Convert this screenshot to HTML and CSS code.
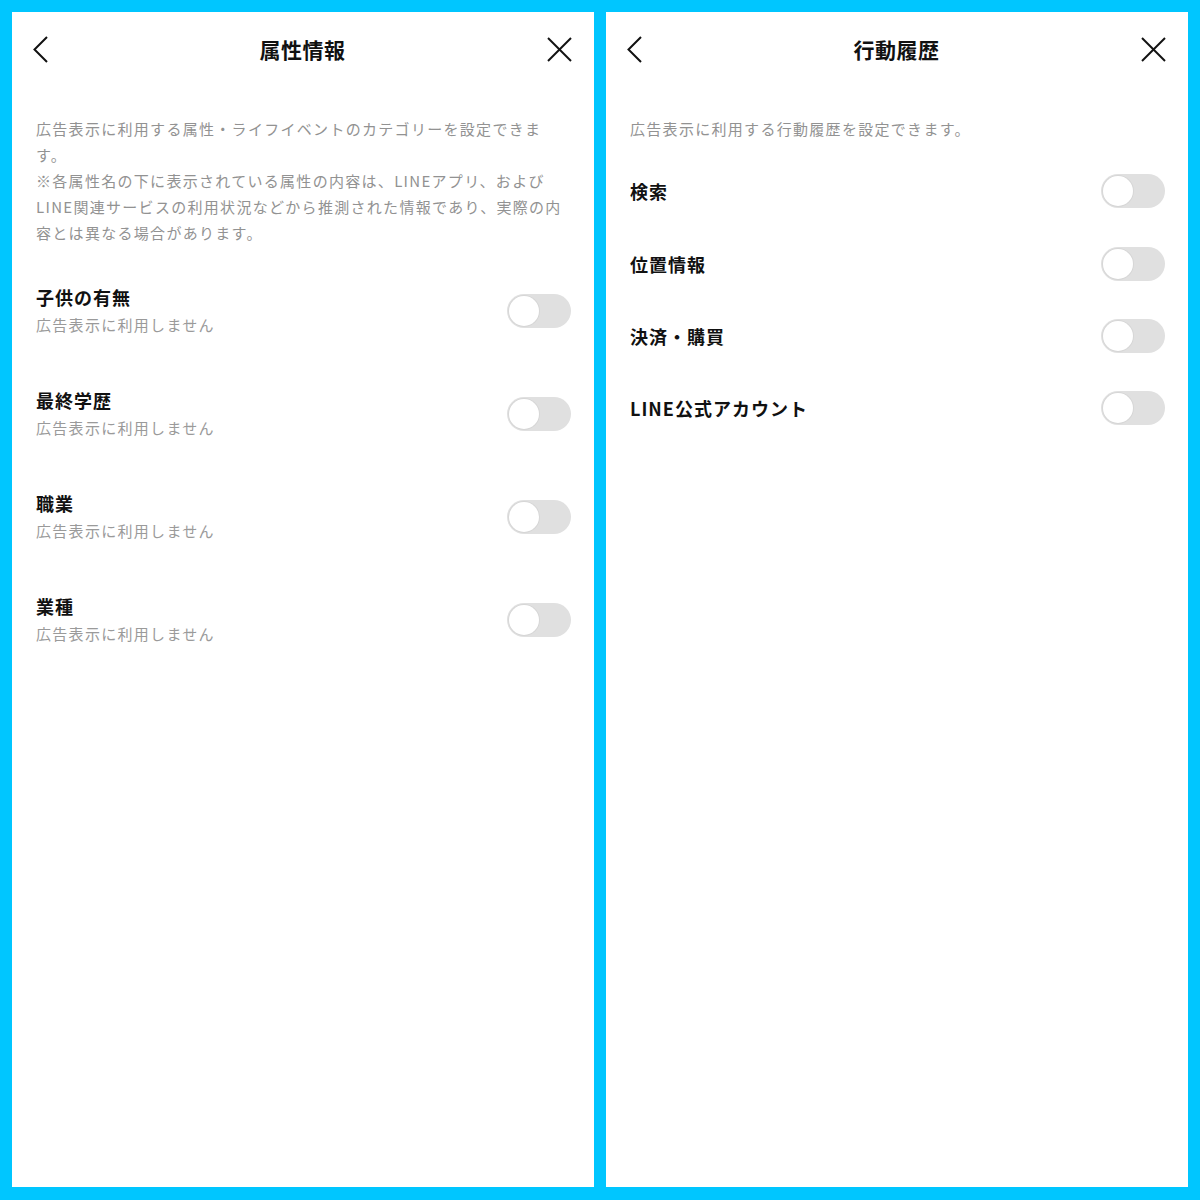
FILE: index.html
```html
<!DOCTYPE html>
<html lang="ja">

<head>
    <meta charset="UTF-8">
    <meta name="viewport" content="width=device-width, initial-scale=1.0">
    <title>広告設定</title>
    <link rel="stylesheet" href="styles.css">
</head>

<body>
    <!-- 属性情報 -->
    <div class="panel">
        <div class="header">
            <svg class="back" width="15" height="27" viewBox="0 0 15 27">
                <polyline points="14,1 1.5,13.5 14,26" />
            </svg>
            <h1>属性情報</h1>
            <svg class="close" width="25" height="25" viewBox="0 0 25 25">
                <line x1="1" y1="1" x2="24" y2="24" />
                <line x1="24" y1="1" x2="1" y2="24" />
            </svg>
        </div>
        <p class="desc">広告表示に利用する属性・ライフイベントのカテゴリーを設定できます。<br>※各属性名の下に表示されている属性の内容は、LINEアプリ、およびLINE関連サービスの利用状況などから推測された情報であり、実際の内容とは異なる場合があります。</p>
        <div class="list attr">
            <div class="row">
                <div class="label">
                    <div class="name">子供の有無</div>
                    <div class="sub">広告表示に利用しません</div>
                </div>
                <div class="toggle"></div>
            </div>
            <div class="row">
                <div class="label">
                    <div class="name">最終学歴</div>
                    <div class="sub">広告表示に利用しません</div>
                </div>
                <div class="toggle"></div>
            </div>
            <div class="row">
                <div class="label">
                    <div class="name">職業</div>
                    <div class="sub">広告表示に利用しません</div>
                </div>
                <div class="toggle"></div>
            </div>
            <div class="row">
                <div class="label">
                    <div class="name">業種</div>
                    <div class="sub">広告表示に利用しません</div>
                </div>
                <div class="toggle"></div>
            </div>
        </div>
    </div>

    <!-- 行動履歴 -->
    <div class="panel">
        <div class="header">
            <svg class="back" width="15" height="27" viewBox="0 0 15 27">
                <polyline points="14,1 1.5,13.5 14,26" />
            </svg>
            <h1>行動履歴</h1>
            <svg class="close" width="25" height="25" viewBox="0 0 25 25">
                <line x1="1" y1="1" x2="24" y2="24" />
                <line x1="24" y1="1" x2="1" y2="24" />
            </svg>
        </div>
        <p class="desc">広告表示に利用する行動履歴を設定できます。</p>
        <div class="list history">
            <div class="row">
                <div class="name">検索</div>
                <div class="toggle"></div>
            </div>
            <div class="row">
                <div class="name">位置情報</div>
                <div class="toggle"></div>
            </div>
            <div class="row">
                <div class="name">決済・購買</div>
                <div class="toggle"></div>
            </div>
            <div class="row">
                <div class="name">LINE公式アカウント</div>
                <div class="toggle"></div>
            </div>
        </div>
    </div>
</body>

</html>
```

FILE: styles.css
```css
* {
    margin: 0;
    padding: 0;
    box-sizing: border-box;
}

body {
    display: flex;
    gap: 12px;
    height: 1200px;
    padding: 12px 12px 13px;
    background-color: #00c6ff;
    font-family: 'Noto Sans CJK JP', 'Noto Sans', sans-serif;
    color: #111;
}

.panel {
    flex: 1;
    background-color: #fff;
}

.header {
    display: grid;
    grid-template-columns: 1fr auto 1fr;
    align-items: center;
    height: 74px;
    padding: 0 22px 0 21px;
}

.header h1 {
    font-size: 21px;
    font-weight: 700;
    letter-spacing: 0.5px;
}

.back,
.close {
    fill: none;
    stroke: #111;
    stroke-width: 2;
}

.close {
    justify-self: end;
}

.desc {
    margin-top: 30px;
    padding: 0 28px 0 24px;
    font-size: 15px;
    line-height: 26px;
    letter-spacing: 1.3px;
    color: #929292;
}

.list {
    padding: 0 23px 0 24px;
}

.row {
    display: flex;
    align-items: center;
    justify-content: space-between;
}

.name {
    font-size: 18px;
    font-weight: 700;
    line-height: 28px;
    letter-spacing: 1px;
}

.sub {
    font-size: 15px;
    line-height: 28px;
    letter-spacing: 1.3px;
    color: #9a9a9a;
}

.attr {
    display: flex;
    flex-direction: column;
    gap: 47px;
    margin-top: 37px;
}

.history {
    margin-top: 13px;
}

.history .row {
    height: 72.4px;
}

.toggle {
    position: relative;
    width: 64px;
    height: 34px;
    border-radius: 17px;
    background-color: #e0e0e0;
}

/* knob sits on the left: switch is off */
.toggle::after {
    content: "";
    position: absolute;
    top: 2px;
    left: 2px;
    width: 30px;
    height: 30px;
    border-radius: 50%;
    background-color: #fff;
    box-shadow: 0 0 0 1px #d6d6d6;
}
```
